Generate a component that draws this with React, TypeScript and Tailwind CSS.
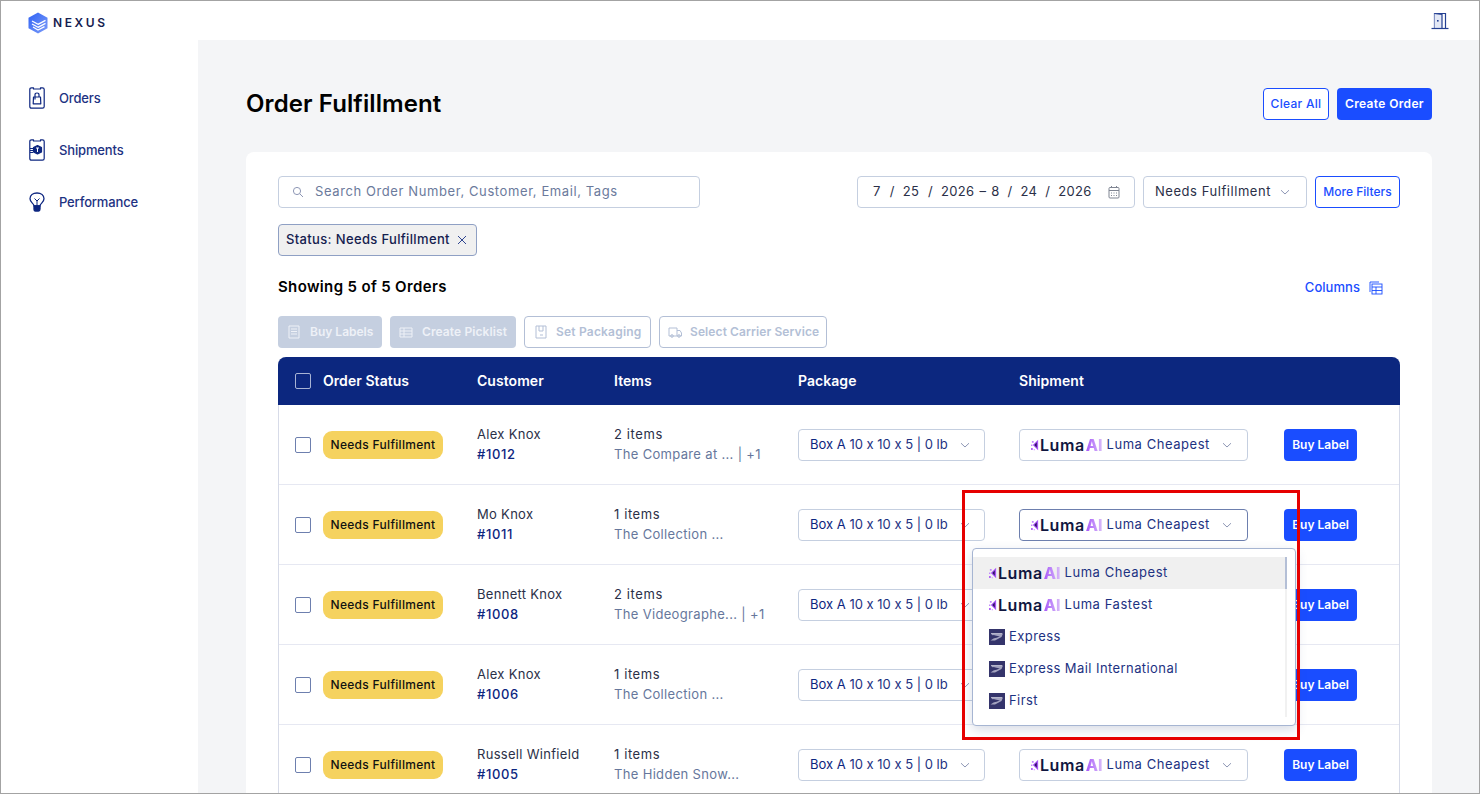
import React from "react";

const navy = "#0d2680";

function Chevron({ className = "" }: { className?: string }) {
  return (
    <svg viewBox="0 0 12 12" className={`w-[12px] h-[12px] ${className}`} fill="none" stroke="#8e97b5" strokeWidth="1">
      <path d="M2 4.2 L6 8 L10 4.2" />
    </svg>
  );
}

function LumaLogo() {
  return (
    <span className="inline-flex items-center shrink-0 h-[20px]">
      <svg viewBox="0 0 9 13" className="w-[8px] h-[12px] mr-[1px]">
        <path d="M8 0.5 L8 12.5 L2 6.5 Z" fill="#a855f7" />
        <path d="M6.5 3.5 L6.5 9.5 L3.8 6.5 Z" fill="#2e1065" />
        <rect x="0" y="10" width="2" height="2" fill="#a855f7" />
        <rect x="0" y="6" width="1.6" height="1.6" fill="#c084fc" />
        <rect x="1" y="2" width="2" height="2" fill="#c084fc" />
        <rect x="3" y="11" width="1.5" height="1.5" fill="#d8b4fe" />
      </svg>
      <span className="text-[16px] leading-[20px] font-semibold text-[#10163f] tracking-[0.55px]">Luma</span>
      <span className="ml-[1px] text-[16px] leading-[20px] font-extrabold bg-gradient-to-r from-[#a855f7] to-[#dcc0f8] bg-clip-text text-transparent">AI</span>
    </span>
  );
}

function UspsIcon() {
  return (
    <svg viewBox="0 0 16 16" className="w-[16px] h-[16px] shrink-0">
      <rect width="16" height="16" fill="#34346b" />
      <path d="M2 4.5 H14 L12.5 8 L6 11.5 H1.5 L4.5 9.5 L9.5 8 L3 6 Z" fill="#a3a3bf" />
      <path d="M4 6 L11 7.6 L5 9 Z" fill="#34346b" />
      <path d="M2 4.5 H13" stroke="#d5d5e2" strokeWidth="0.7" />
    </svg>
  );
}

function NexusLogo() {
  return (
    <svg viewBox="0 0 20 22" className="w-[20px] h-[22px]">
      <defs>
        <linearGradient id="nx" x1="0" y1="0" x2="1" y2="1">
          <stop offset="0" stopColor="#2f62f5" />
          <stop offset="1" stopColor="#7c9cf8" />
        </linearGradient>
      </defs>
      <path d="M10 0.5 L19.5 5.8 V16.2 L10 21.5 L0.5 16.2 V5.8 Z" fill="url(#nx)" />
      <g fill="none" stroke="#fff" strokeWidth="1.3" strokeLinejoin="round">
        <path d="M4 9 L10 12.3 L17.5 8.4" />
        <path d="M4 12 L10 15.3 L17.5 11.4" />
        <path d="M5 15 L10 18 L16.5 14.6" />
      </g>
    </svg>
  );
}

function OrdersIcon() {
  return (
    <svg viewBox="0 0 16 22" className="w-[16px] h-[22px]" fill="none" stroke={navy} strokeWidth="1.2" strokeLinejoin="round">
      <path d="M2.5 0.8 H4.5 V2 H11.5 V0.8 H13.5 Q15.2 0.8 15.2 2.5 V19.5 Q15.2 21.2 13.5 21.2 H2.5 Q0.8 21.2 0.8 19.5 V2.5 Q0.8 0.8 2.5 0.8 Z" />
      <path d="M4.5 10 H11.5 L11.8 16.8 H4.2 Z" />
      <path d="M6 12.5 V7.8 Q6 6 8 6 Q10 6 10 7.8 V10" />
    </svg>
  );
}

function ShipmentsIcon() {
  return (
    <svg viewBox="0 0 16 22" className="w-[16px] h-[22px]" fill="none" stroke={navy} strokeWidth="1.2" strokeLinejoin="round">
      <path d="M2.5 0.8 H4.5 V2 H11.5 V0.8 H13.5 Q15.2 0.8 15.2 2.5 V19.5 Q15.2 21.2 13.5 21.2 H2.5 Q0.8 21.2 0.8 19.5 V2.5 Q0.8 0.8 2.5 0.8 Z" />
      <path d="M8.5 6.5 L12.5 8.5 V13 L8.5 15 L4.5 13 V8.5 Z" fill={navy} />
      <path d="M7 9 H10 M8.5 9 V13" stroke="#fff" strokeWidth="1" />
      <path d="M1 9.5 H4 M1 11.5 H4 M1 13.5 H4" strokeWidth="1" />
    </svg>
  );
}

function BulbIcon() {
  return (
    <svg viewBox="0 0 16 20" className="w-[16px] h-[20px]" fill="none" stroke={navy} strokeWidth="1.3" strokeLinejoin="round">
      <path d="M5 14 C5 11.5 1 10.5 1 6.8 C1 3.3 4 1 8 1 C12 1 15 3.3 15 6.8 C15 10.5 11 11.5 11 14 Z" />
      <path d="M5.5 6.5 L8 9 L10.5 6.5 M8 9 V14" strokeWidth="1" />
      <path d="M5 14 H11 V17 Q11 19 9.5 19 H6.5 Q5 19 5 17 Z" fill={navy} />
    </svg>
  );
}

function DoorIcon() {
  return (
    <svg viewBox="0 0 18 18" className="w-[18px] h-[18px]" fill="none" stroke="#243f92" strokeWidth="1.2">
      <path d="M3.5 16.5 V1.5 H14.5 V16.5" />
      <path d="M3.5 1.5 L11 2.5 V16.5 H3.5" fill="#e3e8f5" />
      <path d="M0.5 16.5 H17.5" />
      <rect x="6" y="8" width="1.6" height="1.6" fill="#243f92" stroke="none" />
    </svg>
  );
}

function SmallIcon({ children }: { children: React.ReactNode }) {
  return (
    <svg viewBox="0 0 14 14" className="w-[14px] h-[14px] shrink-0" fill="none" stroke="currentColor" strokeWidth="1">
      {children}
    </svg>
  );
}

function Luma({ label }: { label: string }) {
  return (
    <span className="flex items-center">
      <LumaLogo />
      <span className="ml-[4px] text-[13px] tracking-[0.55px] text-[#1d3282] whitespace-nowrap">{label}</span>
    </span>
  );
}

const rows = [
  { name: "Alex Knox", id: "#1012", items: "2 items", desc: "The Compare at ... | +1" },
  { name: "Mo Knox", id: "#1011", items: "1 items", desc: "The Collection ..." },
  { name: "Bennett Knox", id: "#1008", items: "2 items", desc: "The Videographe... | +1" },
  { name: "Alex Knox", id: "#1006", items: "1 items", desc: "The Collection ..." },
  { name: "Russell Winfield", id: "#1005", items: "1 items", desc: "The Hidden Snow..." },
];

const cols = "grid grid-cols-[28px_154px_137px_184px_221px_265px_73px] items-center";

export default function App() {
  return (
    <div className="relative w-[1480px] h-[794px] overflow-hidden bg-white border border-[#a3a3a3] text-[13px] [font-family:Inter,'Liberation_Sans',sans-serif]">
      <header className="h-[39px] flex items-center justify-between pl-[27px] pr-[30px]">
        <div className="flex items-center gap-[5px] mt-[4px]">
          <NexusLogo />
          <span className="text-[12px] font-semibold tracking-[2.6px] text-[#15204f]">NEXUS</span>
        </div>
        <DoorIcon />
      </header>
      <div className="flex h-[754px]">
        <nav className="w-[197px] shrink-0 pt-[32px] pl-[28px]">
          {[
            ["Orders", <OrdersIcon />],
            ["Shipments", <ShipmentsIcon />],
            ["Performance", <BulbIcon />],
          ].map(([t, icon], i) => (
            <div key={i} className="h-[52px] flex items-center gap-[14px] text-[13px] font-medium tracking-[-0.15px] text-[#1d3282]">
              <span className="w-[16px] flex justify-center">{icon}</span>
              <span className="pt-[2px]">{t}</span>
            </div>
          ))}
        </nav>
        <main className="flex-1 bg-[#f4f5f7] pl-[48px] pr-[47px] pt-[48px]">
          <div className="flex items-center justify-between h-[32px]">
            <h1 className="text-[24px] font-semibold text-black tracking-[0.1px]">Order Fulfillment</h1>
            <div className="flex gap-[8px]">
              <button className="h-[32px] w-[66px] rounded-[4px] border border-[#1a4dff] bg-white text-[12px] font-medium tracking-[0.3px] text-[#1a4dff]">Clear All</button>
              <button className="h-[32px] w-[95px] rounded-[4px] bg-[#1a4dff] text-[12px] font-semibold tracking-[0.35px] text-white">Create Order</button>
            </div>
          </div>
          <section className="mt-[32px] bg-white rounded-t-[8px] px-[32px] pt-[24px] h-[700px]">
            <div className="flex items-center h-[32px]">
              <div className="w-[422px] h-[32px] rounded-[4px] border border-[#c5cfe0] flex items-center pl-[13px] gap-[11px] text-[#6b7a9c]">
                <svg viewBox="0 0 12 12" className="w-[12px] h-[12px]" fill="none" stroke="#8e97b5">
                  <circle cx="5" cy="5" r="3.6" />
                  <path d="M7.8 7.8 L11 11" />
                </svg>
                <span className="tracking-[0.6px]">Search Order Number, Customer, Email, Tags</span>
              </div>
              <div className="ml-auto w-[278px] h-[32px] rounded-[4px] border border-[#c5cfe0] flex items-center justify-between pl-[15px] pr-[14px] text-[#2b3048]">
                <span className="flex tracking-[0.3px] whitespace-nowrap">
                  <span>7</span><span className="ml-[9px]">/</span><span className="ml-[8px]">25</span><span className="ml-[9px]">/</span><span className="ml-[8px]">2026</span><span className="ml-[5px]">–</span><span className="ml-[5px]">8</span><span className="ml-[8px]">/</span><span className="ml-[8px]">24</span><span className="ml-[8px]">/</span><span className="ml-[8px]">2026</span>
                </span>
                <svg viewBox="0 0 12 14" className="w-[12px] h-[14px]" fill="none" stroke="#7f8592">
                  <rect x="1" y="2.5" width="10" height="10.5" rx="1" />
                  <path d="M1 5.5 H11 M3.5 1 V3 M8.5 1 V3 M3 8 H4 M5.5 8 H6.5 M8 8 H9 M3 10.5 H4 M5.5 10.5 H6.5 M8 10.5 H9" />
                </svg>
              </div>
              <div className="ml-[8px] w-[164px] h-[32px] rounded-[4px] border border-[#c5cfe0] flex items-center justify-between pl-[11px] pr-[15px] text-[#2b3048] tracking-[0.55px]">
                Needs Fulfillment
                <Chevron />
              </div>
              <button className="ml-[8px] w-[85px] h-[32px] rounded-[4px] border border-[#1a4dff] text-[12px] font-medium text-[#1a4dff]">More Filters</button>
            </div>
            <div className="mt-[16px] w-[199px] h-[32px] rounded-[4px] border border-[#8fa0c4] bg-[#f0f0f0] flex items-center pl-[7px] gap-[7px] text-[#15204f] tracking-[0.35px] font-medium whitespace-nowrap">
              Status: Needs Fulfillment
              <svg viewBox="0 0 10 10" className="w-[10px] h-[10px] shrink-0" fill="none" stroke="#2f4590">
                <path d="M1 1 L9 9 M9 1 L1 9" />
              </svg>
            </div>
            <div className="mt-[16px] h-[32px] flex items-center justify-between pr-[17px]">
              <span className="pb-[1px] text-[15px] font-semibold text-black tracking-[0.35px]">Showing 5 of 5 Orders</span>
              <span className="flex items-center gap-[9px] text-[13px] tracking-[0.05px] font-medium text-[#1a4dff]">
                Columns
                <svg viewBox="0 0 14 14" className="w-[14px] h-[14px]" fill="none" stroke="#1a4dff" strokeWidth="0.9">
                  <path d="M1 1 H10 M1 1 V11" />
                  <rect x="3" y="3" width="10" height="10" />
                  <path d="M3 6 H13 M3 9.5 H13 M7 6 V13" />
                </svg>
              </span>
            </div>
            <div className="mt-[12px] flex gap-[8px] h-[32px] text-[12px] font-semibold">
              <div className="w-[104px] rounded-[4px] bg-[#c5cfe0] text-[#eef1f7] flex items-center pl-[9px] gap-[9px]">
                <SmallIcon><path d="M2 1 H12 V13 H2 Z M4 4 H10 M4 6.5 H10 M4 9 H10" /></SmallIcon>
                Buy Labels
              </div>
              <div className="w-[126px] rounded-[4px] bg-[#c5cfe0] text-[#eef1f7] tracking-[0.1px] flex items-center pl-[9px] gap-[9px]">
                <SmallIcon><path d="M1 3 H13 V12 H1 Z M1 6 H13 M1 9 H13 M5 3 V12" /></SmallIcon>
                Create Picklist
              </div>
              <div className="w-[127px] rounded-[4px] border border-[#b3bfd6] text-[#b3bfd6] tracking-[0.2px] flex items-center pl-[9px] gap-[8px]">
                <SmallIcon><path d="M2 1 H12 V13 H2 Z M5 1 V6 H9 V1 M6 10 H9" /></SmallIcon>
                Set Packaging
              </div>
              <div className="w-[168px] rounded-[4px] border border-[#b3bfd6] text-[#b3bfd6] tracking-[0.1px] flex items-center pl-[8px] gap-[8px]">
                <SmallIcon><path d="M1 3 H9 V11 H1 Z M9 5.5 H12 L13.5 8 V11 H9" /><circle cx="4" cy="11" r="1.3" /><circle cx="11" cy="11" r="1.3" /></SmallIcon>
                Select Carrier Service
              </div>
            </div>
            <div className="mt-[9px] rounded-t-[8px] border-x border-[#d7dbe8]">
              <div className={`${cols} pl-[17px] h-[48px] bg-[#0c277f] rounded-t-[8px] -mx-px text-[14px] font-semibold tracking-[0.05px] text-white`}>
                <span className="w-[16px] h-[16px] rounded-[2px] border border-[#a8b3d4]" />
                <span className="pb-[2px]">Order Status</span>
                <span className="pb-[2px]">Customer</span>
                <span className="pb-[2px]">Items</span>
                <span className="pb-[2px]">Package</span>
                <span className="pb-[2px]">Shipment</span>
                <span />
              </div>
              {rows.map((r) => (
                <div key={r.id} className={`${cols} pl-[16px] h-[80px] border-b border-[#e6e8f2]`}>
                  <span className="w-[16px] h-[16px] rounded-[2px] border border-[#6d7fae]" />
                  <span className="w-[120px] h-[28px] rounded-[9px] bg-[#f5d25e] flex items-center justify-center text-[12px] font-medium tracking-[0.3px] text-[#111]">Needs Fulfillment</span>
                  <div className="leading-[20px] pb-[2px]">
                    <div className="text-[#2b3048] tracking-[0.3px]">{r.name}</div>
                    <div className="text-[#0d2680] font-medium tracking-[0.6px]">{r.id}</div>
                  </div>
                  <div className="leading-[20px] pb-[2px]">
                    <div className="text-[#2b3048] tracking-[0.6px]">{r.items}</div>
                    <div className="text-[#66779c] tracking-[0.33px] whitespace-nowrap">{r.desc}</div>
                  </div>
                  <div className="w-[187px] h-[32px] rounded-[4px] border border-[#c5cfe0] bg-white flex items-center justify-between pl-[11px] pr-[13px] text-[#0d2680] whitespace-nowrap [font-feature-settings:'calt'_0]">
                    <span><span>Box A</span> <span className="text-[#1d3282]">10 x 10 x 5 | 0 lb</span></span>
                    <Chevron />
                  </div>
                  <div className={`w-[229px] h-[32px] rounded-[4px] border ${r.id === "#1011" ? "border-[#6d7fae]" : "border-[#c5cfe0]"} flex items-center justify-between pl-[11px] pr-[14px]`}>
                    <Luma label="Luma Cheapest" />
                    <Chevron />
                  </div>
                  <button className="h-[32px] w-[73px] rounded-[4px] bg-[#1a4dff] text-[12px] font-semibold text-white">Buy Label</button>
                </div>
              ))}
            </div>
          </section>
        </main>
      </div>

      <div className="absolute left-[971px] top-[547px] w-[324px] h-[178px] rounded-[4px] border border-[#a6b5d2] bg-white shadow-[0_4px_12px_rgba(60,80,130,0.2)] pt-[8px] z-10">
        <div className="relative">
          <div className="w-[312px]">
            <div className="h-[32px] bg-[#f0f0f0] pl-[16px] flex items-center"><Luma label="Luma Cheapest" /></div>
            <div className="h-[32px] pl-[16px] flex items-center"><Luma label="Luma Fastest" /></div>
            {["Express", "Express Mail International", "First"].map((t) => (
              <div key={t} className="h-[32px] pl-[16px] flex items-center gap-[4px] text-[13px] tracking-[0.42px] text-[#1d3282]">
                <UspsIcon />
                {t}
              </div>
            ))}
          </div>
          <div className="absolute left-[312px] top-0 w-[2px] h-[160px] bg-[#f1f1f1]">
            <div className="h-[32px] bg-[#b4bfd6]" />
          </div>
        </div>
      </div>

      <div className="absolute left-[961px] top-[489px] w-[338px] h-[250px] border-[3px] border-[#e60000] z-20 pointer-events-none" />
    </div>
  );
}
